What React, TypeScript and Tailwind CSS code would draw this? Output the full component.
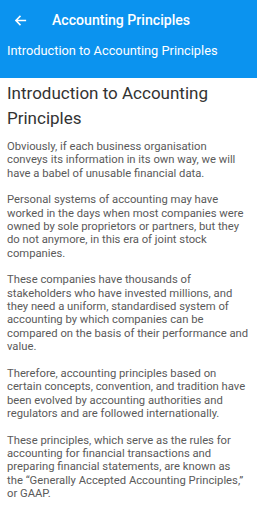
import React from "react";

const paras = [
  "Obviously, if each business organisation conveys its information in its own way, we will have a babel of unusable financial data.",
  "Personal systems of accounting may have worked in the days when most companies were owned by sole proprietors or partners, but they do not anymore, in this era of joint stock companies.",
  "These companies have thousands of stakeholders who have invested millions, and they need a uniform, standardised system of accounting by which companies can be compared on the basis of their performance and value.",
  "Therefore, accounting principles based on certain concepts, convention, and tradition have been evolved by accounting authorities and regulators and are followed internationally.",
  "These principles, which serve as the rules for accounting for financial transactions and preparing financial statements, are known as the \u201cGenerally Accepted Accounting Principles,\u201d or GAAP.",
];

export default function App() {
  return (
    <div className="w-[257px] h-[512px] overflow-hidden bg-white font-['Roboto','Liberation_Sans',sans-serif]">
      <div className="bg-[#0b93ef] h-[78px] text-white">
        <div className="flex items-center h-[40px]">
          <svg width="13" height="13" viewBox="0 0 24 24" className="ml-[14px]" fill="none" stroke="white" strokeWidth="2.8" strokeLinecap="square">
            <path d="M21 12H4M11 4.5L3.5 12L11 19.5" />
          </svg>
          <span className="ml-[25px] text-[14.1px] font-medium leading-none">Accounting Principles</span>
        </div>
        <div className="pl-[7px] pt-[3px] text-[12.8px] leading-[16px]">Introduction to Accounting Principles</div>
      </div>
      <div className="pl-[7px] pr-[8px]">
        <h1 className="mt-[3px] text-[17px] leading-[25px] font-normal text-[#333333]">Introduction to Accounting Principles</h1>
        <div className="mt-[9px] text-[11.25px] leading-[13.35px] text-[#5a5a5a]">
          {paras.map((p, i) => (
            <p key={i} className="mb-[13.35px]">{p}</p>
          ))}
        </div>
      </div>
    </div>
  );
}
